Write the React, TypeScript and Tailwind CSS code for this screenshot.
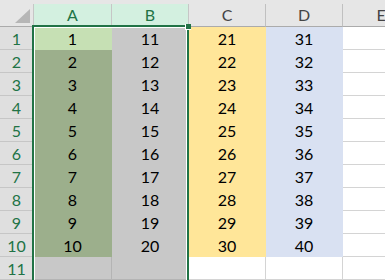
import React from "react";

type Cell = { text: string; cls: string };

const rowCells = (r: number): Cell[] => {
  const a: Cell =
    r === 1
      ? { text: "1", cls: "bg-[#c6e0b4] border-[#c6e0b4]" }
      : r <= 10
      ? { text: String(r), cls: "bg-[#9caf8c] border-[#9caf8c]" }
      : { text: "", cls: "bg-[#c8c8c8] border-[#b4b4b4]" };
  const b: Cell =
    r <= 10
      ? { text: String(r + 10), cls: "bg-[#c8c8c8] border-[#c8c8c8]" }
      : { text: "", cls: "bg-[#c8c8c8] border-[#b4b4b4]" };
  const c: Cell =
    r <= 10
      ? { text: String(r + 20), cls: "bg-[#ffe699] border-[#ffe699]" }
      : { text: "", cls: "bg-white border-[#d4d4d4]" };
  const d: Cell =
    r <= 10
      ? { text: String(r + 30), cls: "bg-[#d9e1f2] border-[#d9e1f2]" }
      : { text: "", cls: "bg-white border-[#d4d4d4]" };
  const e: Cell = { text: "", cls: "bg-white border-[#d4d4d4]" };
  return [a, b, c, d, e];
};

export default function App() {
  const rows = Array.from({ length: 11 }, (_, i) => i + 1);
  return (
    <div
      className="relative w-[385px] h-[280px] overflow-hidden bg-white"
      style={{ fontFamily: "Lato, 'Open Sans', sans-serif" }}
    >
      <div className="h-[4px] bg-[#e6e6e6]" />
      <div className="grid grid-cols-[34px_78px_77px_77px_77px_77px] w-[420px]">
        {/* header */}
        <div className="relative h-[23px] bg-[#e6e6e6] border-r border-b border-r-[#c6c6c6] border-b-[#ababab]">
          <svg className="absolute left-[15px] top-[5px]" width="16" height="15" viewBox="0 0 16 15">
            <polygon points="15,0 15,14 0,14" fill="#b6b6b6" />
          </svg>
        </div>
        {["A", "B"].map((l) => (
          <div
            key={l}
            className="h-[23px] bg-[#d3f0e0] border-r border-b border-r-[#c6c6c6] border-b-[#217346] flex items-center justify-center text-[16px] text-[#217346] leading-none"
          >
            {l}
          </div>
        ))}
        {["C", "D", "E"].map((l) => (
          <div
            key={l}
            className="h-[23px] bg-[#e6e6e6] border-r border-b border-r-[#c0c0c0] border-b-[#ababab] flex items-center justify-center text-[16px] text-[#444444] leading-none"
          >
            {l}
          </div>
        ))}
        {rows.map((r) => (
          <React.Fragment key={r}>
            <div className="h-[23px] bg-[#dfdfdf] border-r border-b border-r-[#ababab] border-b-[#c6c6c6] flex items-center justify-center text-[16px] text-[#217346] leading-none pt-[2px]">
              {r}
            </div>
            {rowCells(r).map((c, i) => (
              <div
                key={i}
                className={`h-[23px] border-r border-b ${c.cls} flex items-center justify-center text-[16px] text-black leading-none pt-[2px]`}
              >
                {c.text}
              </div>
            ))}
          </React.Fragment>
        ))}
      </div>
      {/* selection */}
      <div className="absolute left-[32px] top-[25px] w-[157px] h-[300px] border-2 border-[#217346] shadow-[inset_0_0_0_1px_#ffffff]" />
      <div className="absolute left-[185px] top-[24px] w-[6px] h-[6px] bg-[#217346] border-l border-b border-white" />
    </div>
  );
}
